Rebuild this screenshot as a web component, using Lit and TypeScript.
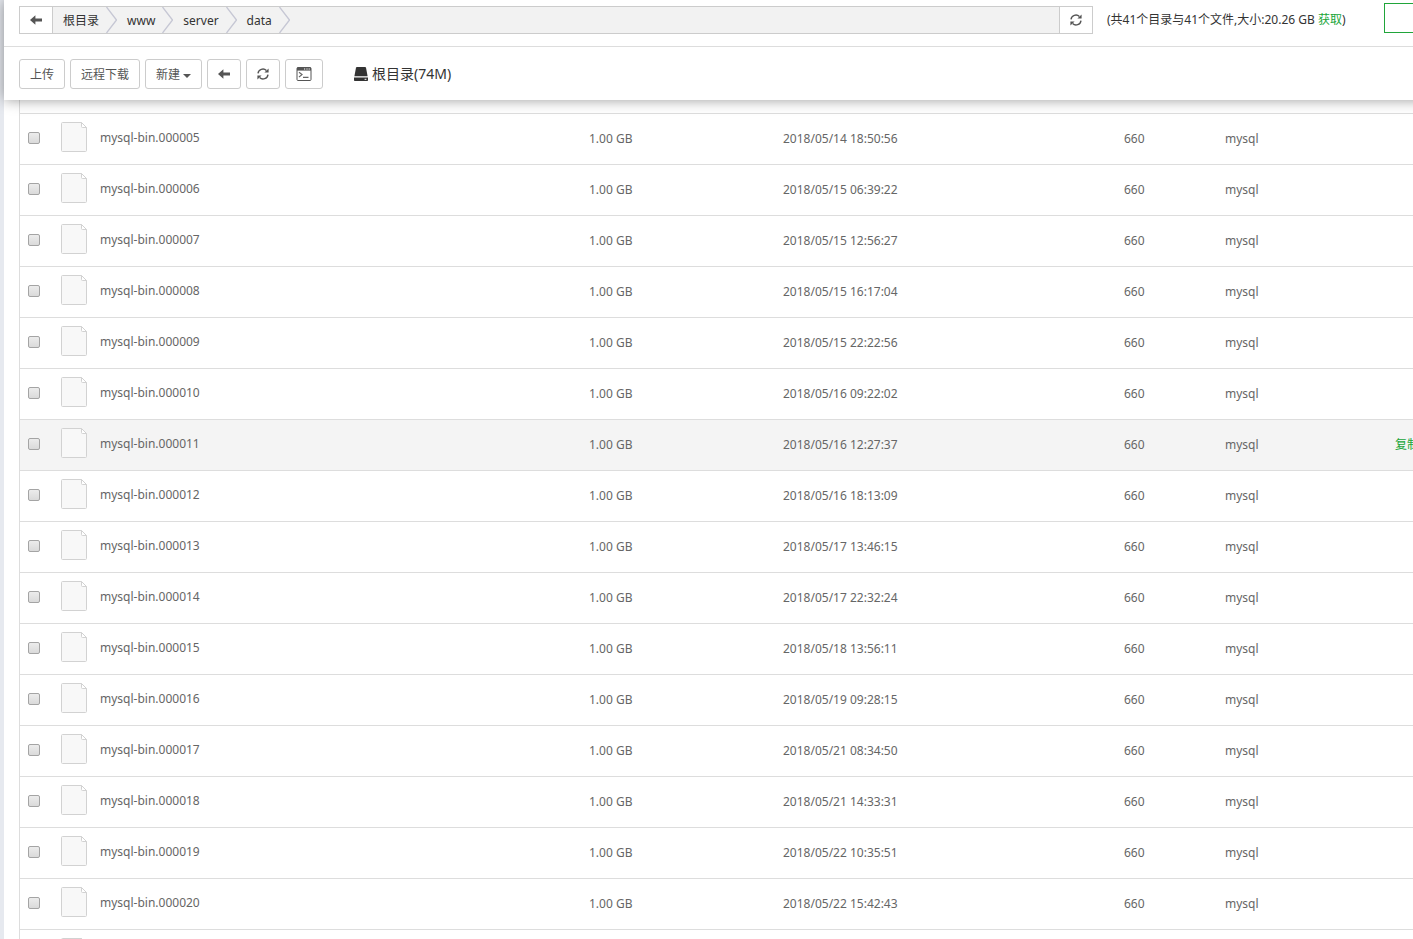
import { LitElement, html, css, nothing } from "lit";
import { customElement, state } from "lit/decorators.js";

interface FileRow {
  name: string;
  date: string;
}

const DATES: string[] = [
  "2018/05/14 18:50:56",
  "2018/05/15 06:39:22",
  "2018/05/15 12:56:27",
  "2018/05/15 16:17:04",
  "2018/05/15 22:22:56",
  "2018/05/16 09:22:02",
  "2018/05/16 12:27:37",
  "2018/05/16 18:13:09",
  "2018/05/17 13:46:15",
  "2018/05/17 22:32:24",
  "2018/05/18 13:56:11",
  "2018/05/19 09:28:15",
  "2018/05/21 08:34:50",
  "2018/05/21 14:33:31",
  "2018/05/22 10:35:51",
  "2018/05/22 15:42:43",
];

const FILES: FileRow[] = DATES.map((date, i) => ({
  name: `mysql-bin.${String(i + 5).padStart(6, "0")}`,
  date,
}));

const CRUMBS = ["根目录", "www", "server", "data"];

const arrowIcon = html`<svg width="12" height="10" viewBox="0 0 12 10" aria-hidden="true">
  <path fill="#555" d="M0 5 5.4 0.2V3.4H12V6.6H5.4V9.8Z" />
</svg>`;

const refreshIcon = html`<svg width="12" height="12" viewBox="0 0 12 12" aria-hidden="true">
  <g fill="none" stroke="#555" stroke-width="1.4">
    <path d="M1 5.4A5 5 0 0 1 9.4 2.4" />
    <path d="M11 6.6A5 5 0 0 1 2.6 9.6" />
  </g>
  <path fill="#555" d="M11.6 .4V4.6H7.4Z M.4 11.6V7.4H4.6Z" />
</svg>`;

const terminalIcon = html`<svg width="16" height="14" viewBox="0 0 16 14" aria-hidden="true">
  <rect x="1" y=".5" width="14" height="13" rx="1" fill="#fff" stroke="#555" />
  <path fill="#555" d="M1 .5H15V3.6H1Z" />
  <path fill="#fff" d="M8 1.5H9.2V2.5H8Z M10.4 1.5H11.6V2.5H10.4Z M12.6 1.5H13.8V2.5H12.6Z" />
  <path fill="none" stroke="#666" stroke-width="1.2" d="M3 5.2 6 7.6 3 10M7 10.3H12.5" />
</svg>`;

const diskIcon = html`<svg width="14" height="14" viewBox="0 0 14 14" aria-hidden="true">
  <path fill="#333" d="M2.8 0H11.2Q11.8 0 12 .7L13.6 9.2H.4L2 .7Q2.2 0 2.8 0Z" />
  <path fill="#333" d="M0 10.6H14V13.2Q14 14 13.2 14H.8Q0 14 0 13.2Z" />
  <rect x="10.6" y="11.8" width="1.8" height="1" fill="#fff" />
</svg>`;

const fileIcon = html`<svg width="26" height="30" viewBox="0 0 26 30" aria-hidden="true">
  <path fill="#f8f8f8" stroke="#d2d2d2" d="M1.5 .5H20.5L25.5 5.5V28.5Q25.5 29.5 24.5 29.5H1.5Q.5 29.5 .5 28.5V1.5Q.5 .5 1.5 .5Z" />
  <path fill="#fff" stroke="#d2d2d2" d="M20.5 .5V4.5Q20.5 5.5 21.5 5.5H25.5Z" />
</svg>`;

const chevron = html`<svg width="11" height="26" viewBox="0 0 11 26" aria-hidden="true">
  <path fill="none" stroke="#c6c7d4" stroke-width="1.3" d="M.5 0 10.5 13 .5 26" />
</svg>`;

@customElement("app-root")
export class AppRoot extends LitElement {
  @state() private active = "mysql-bin.000011";

  static styles = css`
    :host {
      display: block;
      height: 100vh;
      overflow: hidden;
      box-sizing: border-box;
      padding-left: 4px;
      background: #e6e9ef;
      color: #666;
      font: 12px/18px "Noto Sans", "Noto Sans CJK SC", sans-serif;
    }
    * {
      box-sizing: border-box;
    }
    svg {
      display: block;
      flex: none;
    }
    a {
      color: inherit;
      text-decoration: none;
    }
    button {
      font: inherit;
      color: #555;
      background: #fff;
      border: 1px solid #ccc;
      display: flex;
      align-items: center;
      justify-content: center;
      margin: 0;
      padding: 0 10px;
      white-space: nowrap;
    }
    .page {
      display: flex;
      flex-direction: column;
      height: 100%;
      background: #fff;
    }
    .head {
      flex: none;
      position: relative;
      margin-right: -20px;
      padding-right: 20px;
      background: #fff;
      box-shadow: 0 0 13px rgba(0, 0, 0, 0.4);
    }
    .location {
      display: flex;
      height: 47px;
      padding: 6px 0 0 15px;
      border-bottom: 1px solid #ddd;
    }
    .square {
      flex: none;
      width: 34px;
      height: 28px;
    }
    .path {
      flex: 1;
      min-width: 0;
      display: flex;
      height: 28px;
      border: solid #ccc;
      border-width: 1px 0;
      background: #f2f2f2;
      color: #333;
      line-height: 28px;
    }
    .crumb {
      display: flex;
      height: 26px;
      padding-left: 10px;
      gap: 7px;
    }
    .stats {
      flex: 0 0 291px;
      padding-left: 14px;
      line-height: 28px;
      color: #333;
      white-space: nowrap;
    }
    .green {
      color: #20a53a;
    }
    .search {
      flex: 0 0 29px;
      height: 30px;
      margin-top: -3px;
      border-color: #20a53a;
      border-right: 0;
    }
    .tools {
      display: flex;
      align-items: center;
      gap: 5px;
      height: 53px;
      padding: 1px 0 0 15px;
    }
    .tools button {
      height: 30px;
      border-radius: 3px;
    }
    .tools .text {
      padding-top: 2px;
    }
    .caret {
      margin: 2px 0 0 3px;
      border: solid transparent;
      border-width: 4px 4px 0;
      border-top-color: #555;
    }
    .disk {
      display: flex;
      align-items: center;
      gap: 4px;
      margin-left: 26px;
      font-size: 14px;
      color: #333;
    }
    .list {
      flex: 1;
      min-height: 0;
      overflow: hidden;
      margin-left: 15px;
      padding-top: 13px;
      border-left: 1px solid #ddd;
    }
    table {
      width: 100%;
      table-layout: fixed;
      border-collapse: separate;
      border-spacing: 0;
    }
    td {
      height: 51px;
      padding: 0;
      border-top: 1px solid #ddd;
      white-space: nowrap;
      vertical-align: middle;
    }
    .hover td {
      background: #f4f4f4;
    }
    .c-check {
      width: 41px;
    }
    .c-size {
      width: 194px;
    }
    .c-date {
      width: 341px;
    }
    .c-mode {
      width: 101px;
    }
    .c-owner {
      width: 170px;
    }
    .c-action {
      width: 18px;
    }
    .pick {
      padding: 0 0 2px 8px;
    }
    .pick input {
      display: block;
      appearance: none;
      width: 12px;
      height: 12px;
      margin: 0;
      border: 1px solid #a4a4a4;
      border-radius: 2px;
      background: linear-gradient(#ececec, #dadada);
    }
    .pick input:checked {
      background: #20a53a;
    }
    .name {
      display: flex;
      align-items: center;
      gap: 13px;
      padding-bottom: 4px;
    }
    .name span {
      padding-top: 2px;
    }
  `;

  private renderRow(file: FileRow) {
    const on = file.name === this.active;
    return html`<tr class=${on ? "hover" : ""} @mouseenter=${() => (this.active = file.name)}>
      <td class="pick"><input type="checkbox" aria-label=${file.name} /></td>
      <td><a class="name" href="#">${fileIcon}<span>${file.name}</span></a></td>
      <td>1.00 GB</td>
      <td>${file.date}</td>
      <td>660</td>
      <td>mysql</td>
      <td>${on ? html`<a class="green" href="#">复制</a>` : nothing}</td>
    </tr>`;
  }

  render() {
    return html`<main class="page">
      <header class="head">
        <div class="location">
          <button class="square" aria-label="返回">${arrowIcon}</button>
          <nav class="path">
            ${CRUMBS.map((c) => html`<a class="crumb" href="#">${c}${chevron}</a>`)}
          </nav>
          <button class="square" aria-label="刷新">${refreshIcon}</button>
          <div class="stats">
            (共41个目录与41个文件,大小:20.26 GB <a class="green" href="#">获取</a>)
          </div>
          <button class="search" aria-label="搜索"></button>
        </div>
        <div class="tools">
          <button class="text">上传</button>
          <button class="text">远程下载</button>
          <button class="text">新建<span class="caret"></span></button>
          <button aria-label="返回">${arrowIcon}</button>
          <button aria-label="刷新">${refreshIcon}</button>
          <button aria-label="终端">${terminalIcon}</button>
          <a class="disk" href="#">${diskIcon}<span>根目录(74M)</span></a>
        </div>
      </header>
      <section class="list">
        <table>
          <colgroup>
            <col class="c-check" />
            <col />
            <col class="c-size" />
            <col class="c-date" />
            <col class="c-mode" />
            <col class="c-owner" />
            <col class="c-action" />
          </colgroup>
          <tbody>
            ${FILES.map((f) => this.renderRow(f))}
            <tr>
              <td></td>
              <td colspan="6"><span class="name">${fileIcon}</span></td>
            </tr>
          </tbody>
        </table>
      </section>
    </main>`;
  }
}
